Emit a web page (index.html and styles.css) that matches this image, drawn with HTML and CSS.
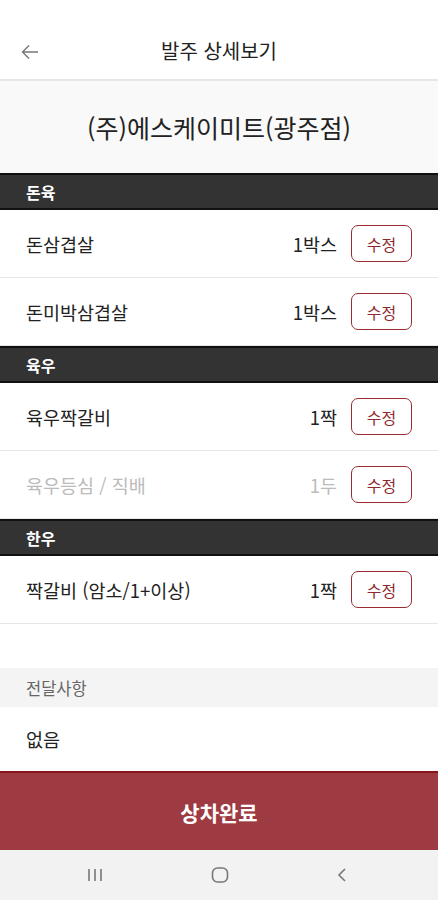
FILE: index.html
```html
<!DOCTYPE html>
<html lang="ko">
<head>
    <meta charset="UTF-8">
    <meta name="viewport" content="width=device-width, initial-scale=1.0">
    <title>발주 상세보기</title>
    <link rel="stylesheet" href="styles.css">
</head>
<body>
    <div class="app">
        <div class="topbar">
            <span class="back">
                <svg width="20" height="20" viewBox="0 0 20 20"><path d="M18 10H3M9 3.5L2.5 10 9 16.5" fill="none" stroke="#777" stroke-width="1.4"/></svg>
            </span>
            <h1>발주 상세보기</h1>
        </div>
        <div class="store">(주)에스케이미트(광주점)</div>

        <div class="category">돈육</div>
        <div class="item">
            <span class="name">돈삼겹살</span>
            <span class="qty">1박스</span>
            <button class="edit">수정</button>
        </div>
        <div class="item">
            <span class="name">돈미박삼겹살</span>
            <span class="qty">1박스</span>
            <button class="edit">수정</button>
        </div>

        <div class="category">육우</div>
        <div class="item">
            <span class="name">육우짝갈비</span>
            <span class="qty">1짝</span>
            <button class="edit">수정</button>
        </div>
        <div class="item disabled">
            <span class="name">육우등심 / 직배</span>
            <span class="qty">1두</span>
            <button class="edit">수정</button>
        </div>

        <div class="category">한우</div>
        <div class="item">
            <span class="name">짝갈비 (암소/1+이상)</span>
            <span class="qty">1짝</span>
            <button class="edit">수정</button>
        </div>

        <div class="spacer"></div>
        <div class="memo-title">전달사항</div>
        <div class="memo">없음</div>

        <button class="submit">상차완료</button>

        <div class="navbar">
            <svg width="18" height="16" viewBox="0 0 18 16"><path d="M3 2v12M9 2v12M15 2v12" stroke="#777" stroke-width="1.6"/></svg>
            <svg width="20" height="20" viewBox="0 0 20 20"><rect x="2.5" y="3" width="15" height="14" rx="5" fill="none" stroke="#777" stroke-width="1.6"/></svg>
            <svg width="14" height="18" viewBox="0 0 14 18"><path d="M10 3L4 9l6 6" fill="none" stroke="#777" stroke-width="1.6"/></svg>
        </div>
    </div>
</body>
</html>
```

FILE: styles.css
```css
body {
    margin: 0;
    font-family: "Noto Sans CJK KR", "Noto Sans", sans-serif;
    background: #fff;
    color: #222;
}
.app {
    width: 438px;
    height: 900px;
    display: flex;
    flex-direction: column;
    overflow: hidden;
}
.topbar {
    height: 81px;
    flex-shrink: 0;
    display: flex;
    align-items: center;
    justify-content: center;
    position: relative;
    padding-top: 22px;
    box-sizing: border-box;
    border-bottom: 2px solid #e6e6e6;
}
.topbar h1 {
    margin: 0;
    font-size: 20px;
    font-weight: 400;
    color: #222;
}
.back {
    position: absolute;
    left: 20px;
    top: 42px;
    line-height: 0;
}
.store {
    height: 92px;
    flex-shrink: 0;
    display: flex;
    align-items: center;
    justify-content: center;
    background: #f9f9f9;
    font-size: 25px;
    color: #222;
}
.category {
    height: 37px;
    flex-shrink: 0;
    box-sizing: border-box;
    display: flex;
    align-items: center;
    padding-left: 26px;
    background: #333;
    border-top: 2px solid #111;
    border-bottom: 2px solid #111;
    color: #fff;
    font-size: 16px;
    font-weight: 700;
}
.item {
    height: 68px;
    flex-shrink: 0;
    box-sizing: border-box;
    display: flex;
    align-items: center;
    padding: 0 26px;
    border-bottom: 1px solid #e6e6e6;
    font-size: 18.5px;
}
.item .name {
    flex: 1;
}
.item .qty {
    margin-right: 14px;
}
.item.disabled {
    color: #bbb;
}
.edit {
    width: 61px;
    height: 37px;
    border: 1.5px solid #9a2c32;
    border-radius: 7px;
    background: #fff;
    color: #8e2a2e;
    font-family: inherit;
    font-size: 16px;
    padding: 0;
}
.spacer {
    height: 44px;
    flex-shrink: 0;
}
.memo-title {
    height: 39px;
    flex-shrink: 0;
    display: flex;
    align-items: center;
    padding-left: 26px;
    background: #f4f4f4;
    color: #666;
    font-size: 16.5px;
}
.memo {
    height: 64px;
    flex-shrink: 0;
    display: flex;
    align-items: center;
    padding-left: 26px;
    font-size: 18.5px;
}
.submit {
    height: 79px;
    flex-shrink: 0;
    border: none;
    border-top: 2px solid #85161c;
    background: #9e3a41;
    color: #fff;
    font-family: inherit;
    font-size: 21px;
    font-weight: 700;
    padding: 0;
}
.navbar {
    flex: 1;
    display: flex;
    align-items: center;
    justify-content: space-between;
    padding: 0 89px 0 86px;
    background: #f2f2f2;
}
```
